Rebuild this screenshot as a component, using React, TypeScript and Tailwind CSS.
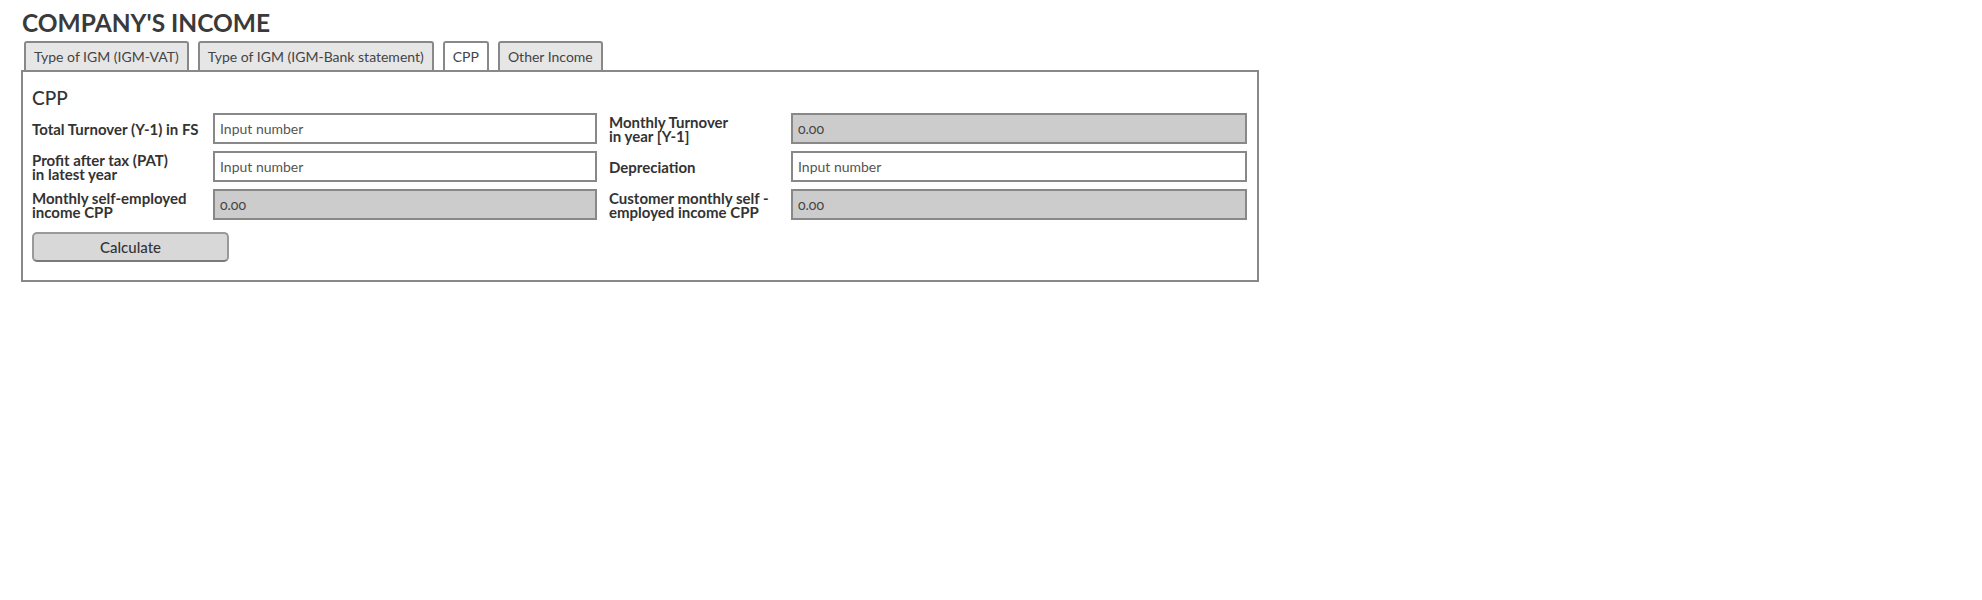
import React from 'react';

const tabs = [
  { id: 'vat', label: 'Type of IGM (IGM-VAT)' },
  { id: 'bank', label: 'Type of IGM (IGM-Bank statement)' },
  { id: 'cpp', label: 'CPP' },
  { id: 'other', label: 'Other Income' },
];

type Field = { label: React.ReactNode; value?: string; readOnly?: boolean };

const Label: React.FC<{ children: React.ReactNode }> = ({ children }) => (
  <div className="flex items-center text-[15px] leading-[14px] font-bold text-[#333]">
    <div>{children}</div>
  </div>
);

const NumberInput: React.FC<{ value?: string; readOnly?: boolean }> = ({ value, readOnly }) => (
  <input
    type="text"
    readOnly={readOnly}
    defaultValue={value}
    placeholder={readOnly ? '' : 'Input number'}
    className={`h-[31px] w-full border-2 border-[#888] px-[5px] text-[14px] text-[#444] placeholder:text-[#555] outline-none oldstyle-nums ${
      readOnly ? 'bg-[#cccccc]' : 'bg-white'
    }`}
  />
);

export default function App() {
  const left: Field[] = [
    { label: 'Total Turnover (Y-1) in FS' },
    { label: <>Profit after tax (PAT)<br />in latest year</> },
    { label: <>Monthly self-employed<br />income CPP</>, value: '0.00', readOnly: true },
  ];
  const right: Field[] = [
    { label: <>Monthly Turnover<br />in year [Y-1]</>, value: '0.00', readOnly: true },
    { label: 'Depreciation' },
    { label: <>Customer monthly self -<br />employed income CPP</>, value: '0.00', readOnly: true },
  ];

  return (
    <div className="min-h-[600px] bg-white px-[21px] pt-[8px] font-['Lato','Open_Sans',sans-serif] text-[#333]">
      <h1 className="ml-[1px] text-[24.5px] leading-[30px] font-bold text-[#3a3a3a]">COMPANY'S INCOME</h1>

      {/* tabs */}
      <div className="mt-[3px] ml-[3px] flex gap-[9px]">
        {tabs.map((t) => (
          <div
            key={t.id}
            className={`h-[29px] rounded-t-[3px] border-2 border-b-0 border-[#888] px-[8px] pt-[5px] text-[14px] leading-[18px] text-[#444] ${
              t.id === 'cpp' ? 'bg-white' : 'bg-[#e6e6e6]'
            }`}
          >
            {t.label}
          </div>
        ))}
      </div>

      {/* panel */}
      <div className="w-[1238px] border-2 border-[#888] pl-[9px] pr-[9px] pt-[13px] pb-[18px]">
        <h2 className="mb-[3px] text-[19px] leading-[25px] font-medium text-[#333]">CPP</h2>

        <div className="grid grid-cols-[181px_384px_12px_182px_456px] gap-y-[7px]">
          {left.map((f, i) => (
            <React.Fragment key={i}>
              <Label>{f.label}</Label>
              <NumberInput value={f.value} readOnly={f.readOnly} />
              <div />
              <Label>{right[i].label}</Label>
              <NumberInput value={right[i].value} readOnly={right[i].readOnly} />
            </React.Fragment>
          ))}
        </div>

        <button
          type="button"
          className="mt-[12px] h-[30px] w-[197px] rounded-[5px] border-2 border-[#999] border-b-[#7a7a7a] bg-[#d8d8d8] text-[15px] font-medium text-[#333]"
        >
          Calculate
        </button>
      </div>
    </div>
  );
}
